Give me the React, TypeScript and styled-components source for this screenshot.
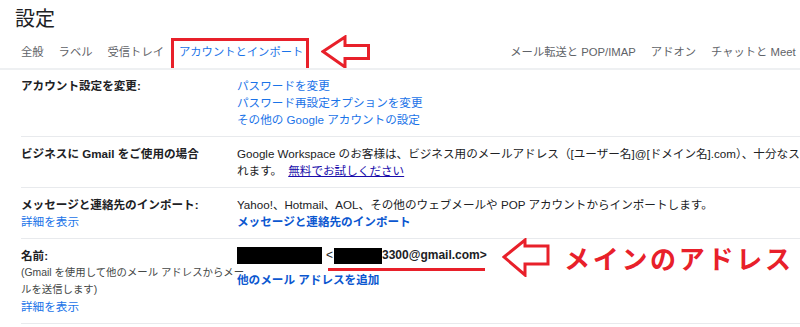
import React from "react";
import styled, { createGlobalStyle } from "styled-components";

const GlobalStyle = createGlobalStyle`
  html, body { margin: 0; padding: 0; background: #ffffff; }
  body {
    overflow: hidden;
    font-family: "Liberation Sans", "Noto Sans CJK JP", sans-serif;
    color: #202124;
  }
`;

const RED = "#e8202a";

const Page = styled.div`
  width: 800px;
  height: 327px;
  overflow: hidden;
  background: #fff;
`;

const Title = styled.h1`
  margin: 0;
  padding: 5px 0 0 15px;
  height: 27px;
  font-size: 20px;
  line-height: 28px;
  font-weight: 400;
  color: #202124;
`;

const TabBar = styled.div`
  display: flex;
  align-items: center;
  height: 36px;
  padding-left: 21px;
  border-bottom: 2px solid #eef0f2;
  white-space: nowrap;
  overflow: hidden;
`;

const TabGroup = styled.div<{ $offset?: number }>`
  display: flex;
  align-items: center;
  gap: 15px;
  flex-shrink: 0;
  margin-left: ${(p) => p.$offset ?? 0}px;
`;

const Tab = styled.span<{ $active?: boolean }>`
  position: relative;
  font-size: 11.3px;
  line-height: 17px;
  margin-top: 4px;
  color: ${(p) => (p.$active ? "#1a73e8" : "#5f6368")};
  ${(p) =>
    p.$active
      ? `
    &::after {
      content: "";
      position: absolute;
      left: -8px;
      right: -6px;
      top: -6px;
      bottom: -10px;
      border: 3px solid ${RED};
    }
  `
      : ""}
`;

const TabArrow = styled.svg`
  flex-shrink: 0;
  margin-left: 18px;
  margin-top: 3px;
`;

const Rows = styled.div`
  padding-left: 21px;
`;

const Row = styled.div<{ $top?: number }>`
  display: grid;
  grid-template-columns: 216px 1fr;
  padding: ${(p) => p.$top ?? 8}px 0 8px 0;
  border-bottom: 1px solid #e8eaed;
  font-size: 11.6px;
  line-height: 17px;
`;

const Label = styled.div`
  font-weight: 700;
  color: #202124;
`;

const LabelCol = styled.div`
  display: flex;
  flex-direction: column;
`;

const Note = styled.div`
  font-size: 10.4px;
  color: #444746;
  line-height: 17px;
  width: 224px;
  word-break: break-all;
`;

const Value = styled.div`
  display: flex;
  flex-direction: column;
  min-width: 0;
  white-space: nowrap;
`;

const Line = styled.div`
  overflow: hidden;
  white-space: nowrap;
`;

const Link = styled.a<{ $bold?: boolean }>`
  color: ${(p) => (p.$bold ? "#0b57d0" : "#1a73e8")};
  font-weight: ${(p) => (p.$bold ? 700 : 400)};
  text-decoration: none;
  cursor: pointer;
`;

const TrialLink = styled.a`
  color: #1a0dab;
  text-decoration: underline;
  margin-left: 6px;
`;

const EmailLine = styled.div`
  position: relative;
  display: flex;
  align-items: center;
  height: 17px;
  margin-bottom: 7px;
`;

const Redact = styled.span<{ $w: number; $h: number }>`
  display: inline-block;
  width: ${(p) => p.$w}px;
  height: ${(p) => p.$h}px;
  background: #000;
`;

const Address = styled.span`
  position: relative;
  display: inline-flex;
  align-items: center;
  margin-left: 4px;
  font-weight: 700;
  font-size: 12px;
  color: #202124;
  &::after {
    content: "";
    position: absolute;
    left: 2px;
    right: 2px;
    bottom: -7px;
    height: 3px;
    background: ${RED};
  }
`;

const Lt = styled.span`
  font-weight: 400;
  margin-right: 1px;
`;

const Annotation = styled.div`
  position: absolute;
  left: 265px;
  top: -9px;
  display: flex;
  align-items: center;
  gap: 14px;
`;

const AnnotationText = styled.span`
  font-family: "Noto Sans CJK JP", sans-serif;
  font-size: 26px;
  line-height: 36px;
  font-weight: 700;
  letter-spacing: 2.7px;
  color: ${RED};
`;

const LeftArrow: React.FC<{ w: number; h: number; points: string }> = ({ w, h, points }) => (
  <svg width={w} height={h} viewBox={`0 0 ${w} ${h}`}>
    <polygon points={points} fill="#fff" stroke={RED} strokeWidth={3} strokeLinejoin="miter" />
  </svg>
);

export default function App() {
  return (
    <Page>
      <GlobalStyle />
      <Title>設定</Title>
      <TabBar>
        <TabGroup>
          <Tab>全般</Tab>
          <Tab>ラベル</Tab>
          <Tab>受信トレイ</Tab>
          <Tab $active>アカウントとインポート</Tab>
        </TabGroup>
        <TabArrow width={50} height={34} viewBox="0 0 50 34">
          <polygon
            points="2,16.5 24,2 24,10.5 47.5,10.5 47.5,23.5 24,23.5 24,32"
            fill="#fff"
            stroke={RED}
            strokeWidth={3}
          />
        </TabArrow>
        <TabGroup $offset={139}>
          <Tab>メール転送と POP/IMAP</Tab>
          <Tab>アドオン</Tab>
          <Tab>チャットと Meet</Tab>
        </TabGroup>
      </TabBar>

      <Rows>
        <Row $top={7}>
          <Label>アカウント設定を変更:</Label>
          <Value>
            <Link>パスワードを変更</Link>
            <Link>パスワード再設定オプションを変更</Link>
            <Link>その他の Google アカウントの設定</Link>
          </Value>
        </Row>

        <Row>
          <Label>ビジネスに Gmail をご使用の場合</Label>
          <Value>
            <Line>
              Google Workspace のお客様は、ビジネス用のメールアドレス（[ユーザー名]@[ドメイン名].com）、十分なストレージ容量、管理ツールをご利用いただけます。
            </Line>
            <Line>
              れます。<TrialLink>無料でお試しください</TrialLink>
            </Line>
          </Value>
        </Row>

        <Row>
          <LabelCol>
            <Label>メッセージと連絡先のインポート:</Label>
            <Link>詳細を表示</Link>
          </LabelCol>
          <Value>
            <Line>Yahoo!、Hotmail、AOL、その他のウェブメールや POP アカウントからインポートします。</Line>
            <Line>
              <Link $bold>メッセージと連絡先のインポート</Link>
            </Line>
          </Value>
        </Row>

        <Row>
          <LabelCol>
            <Label>名前:</Label>
            <Note>(Gmail を使用して他のメール アドレスからメールを送信します)</Note>
            <Link>詳細を表示</Link>
          </LabelCol>
          <Value>
            <EmailLine>
              <Redact $w={85} $h={17} />
              <Address>
                <Lt>&lt;</Lt>
                <Redact $w={48} $h={16} />
                3300@gmail.com&gt;
              </Address>
              <Annotation>
                <LeftArrow w={48} h={39} points="2,19 23,2 23,8 46,8 46,26 23,26 23,37" />
                <AnnotationText>メインのアドレス</AnnotationText>
              </Annotation>
            </EmailLine>
            <Link $bold>他のメール アドレスを追加</Link>
          </Value>
        </Row>
      </Rows>
    </Page>
  );
}
